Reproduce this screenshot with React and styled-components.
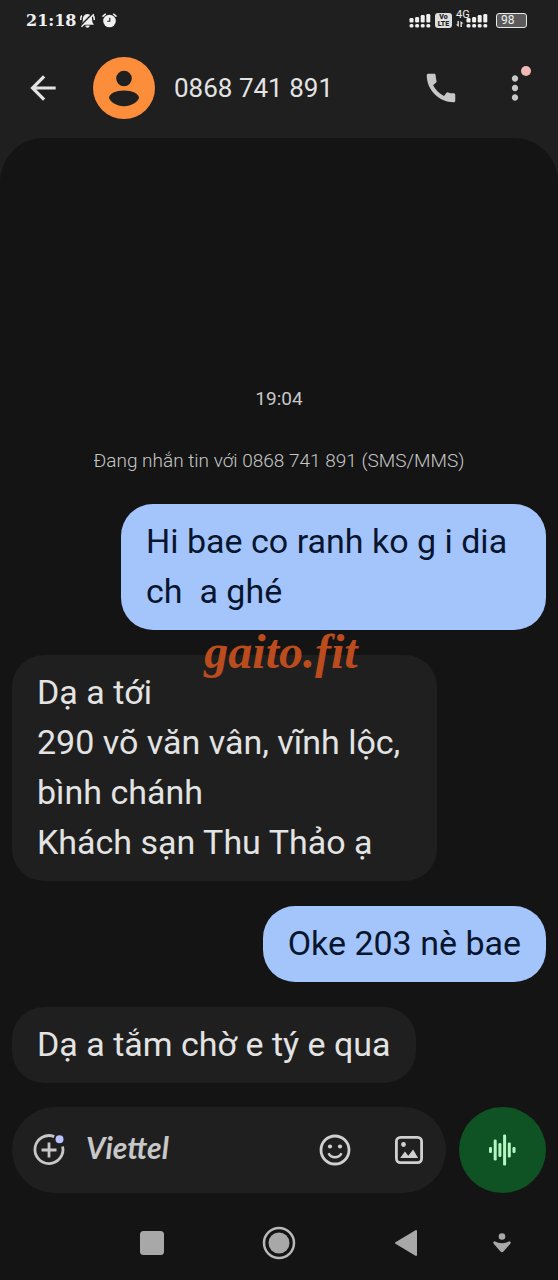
import styled, { createGlobalStyle } from "styled-components";
import { MdArrowBack, MdCall, MdMoreVert } from "react-icons/md";

const GlobalStyle = createGlobalStyle`
    * {
        box-sizing: border-box;
    }
    body {
        margin: 0;
        background-color: #1f1f1f;
        color: #e3e3e3;
        font-family: Roboto, "Noto Sans", sans-serif;
    }
    h1, p, ul {
        margin: 0;
        padding: 0;
    }
    svg {
        display: block;
    }
`;
const Screen = styled.div`
    position: relative;
    display: flex;
    flex-direction: column;
    min-height: 100vh;
`;
const StatusBar = styled.div`
    display: flex;
    justify-content: space-between;
    align-items: center;
    height: 41px;
    padding: 0 31px 0 26px;
`;
const StatusGroup = styled.div`
    display: flex;
    align-items: center;
    gap: ${(props) => props.$gap}px;
`;
const Clock = styled.span`
    font-family: "DejaVu Serif", serif;
    font-size: 16px;
    font-weight: 700;
    color: #f0f0f0;
`;
const VolteBadge = styled.span`
    display: flex;
    flex-direction: column;
    align-items: center;
    justify-content: center;
    width: 17px;
    height: 15px;
    border-radius: 3px;
    background-color: #dedede;
    color: #1f1f1f;
    font-size: 7px;
    font-weight: 900;
    line-height: 7px;
`;
const Network = styled.span`
    position: relative;
    padding-left: 10px;
`;
const NetworkLabel = styled.span`
    position: absolute;
    left: 0;
    top: -4px;
    font-size: 11px;
    line-height: 12px;
    color: #f0f0f0;
`;
const NetworkArrows = styled.svg`
    position: absolute;
    left: 0;
    bottom: 1px;
`;
const Battery = styled.span`
    display: flex;
    align-items: center;
    margin-left: 4px;
    padding-left: 4px;
    width: 31px;
    height: 15px;
    border: 1px solid #e8e8e8;
    border-radius: 3px;
    background-color: #5b5b5b;
    color: #f0f0f0;
    font-size: 12px;
    line-height: 13px;
`;
const AppBar = styled.header`
    display: flex;
    align-items: center;
    padding: 16px 24px 19px 24px;
`;
const IconButton = styled.button`
    position: relative;
    display: flex;
    justify-content: center;
    align-items: center;
    flex-shrink: 0;
    width: 38px;
    height: 38px;
    padding: 0;
    border: none;
    background: none;
    color: ${(props) => props.$color || "#c7c7c7"};
    cursor: pointer;
`;
const Avatar = styled.svg`
    flex-shrink: 0;
    margin-left: 31px;
`;
const ContactName = styled.h1`
    flex: 1;
    margin-left: 19px;
    font-size: 26px;
    font-weight: 400;
    line-height: 36px;
    white-space: nowrap;
`;
const Actions = styled.div`
    display: flex;
    gap: 36px;
`;
const Badge = styled.span`
    position: absolute;
    top: -3px;
    right: 3px;
    width: 10px;
    height: 10px;
    border-radius: 50%;
    background-color: #f2b8b5;
`;
const Panel = styled.main`
    flex: 1;
    display: flex;
    flex-direction: column;
    justify-content: flex-end;
    border-radius: 44px 44px 0 0;
    background-color: #141414;
`;
const Note = styled.p`
    margin-bottom: ${(props) => props.$space}px;
    padding: 0 12px;
    color: #c7c7c7;
    font-size: 19px;
    font-weight: ${(props) => props.$weight || 400};
    line-height: 24px;
    text-align: center;
`;
const Messages = styled.ul`
    display: flex;
    flex-direction: column;
    gap: 25px;
    padding: 0 12px;
    list-style: none;
`;
const Message = styled.li`
    align-self: ${(props) => (props.$mine ? "flex-end" : "flex-start")};
    max-width: calc(100% - 109px);
    padding: 12px 25px 14px;
    border-radius: 32px;
    background-color: ${(props) => (props.$mine ? "#a4c5fb" : "#1f1f1f")};
    color: ${(props) => (props.$mine ? "#08152e" : "#e3e3e3")};
    font-size: 34px;
    line-height: 50px;
    white-space: pre-wrap;
`;
const Composer = styled.form`
    display: flex;
    gap: 13px;
    padding: 24px 12px 0;
`;
const Field = styled.div`
    flex: 1;
    display: flex;
    align-items: center;
    min-width: 0;
    height: 86px;
    padding: 0 18px;
    border-radius: 43px;
    background-color: #1f1f1f;
`;
const TextInput = styled.input`
    flex: 1;
    min-width: 0;
    margin: 0 18px;
    padding: 0 0 6px;
    border: none;
    outline: none;
    background: none;
    color: #e3e3e3;
    font-family: Lato, sans-serif;
    font-size: 30px;
    font-style: italic;
    font-weight: 700;
    line-height: 36px;

    &::placeholder {
        color: #c7c7c7;
        opacity: 1;
    }
`;
const VoiceButton = styled.button`
    display: flex;
    justify-content: center;
    align-items: center;
    flex-shrink: 0;
    width: 87px;
    height: 86px;
    padding: 0;
    border: none;
    border-radius: 50%;
    background-color: #0f5223;
    cursor: pointer;
`;
const NavBar = styled.nav`
    display: grid;
    grid-template-columns: 88px repeat(3, 1fr) 88px;
    align-items: center;
    height: 87px;
    padding-top: 13px;
`;
const NavButton = styled.button`
    display: flex;
    justify-content: center;
    align-items: center;
    grid-column: ${(props) => props.$column};
    width: ${(props) => props.$width || "100%"};
    height: 48px;
    padding: 0;
    border: none;
    background: none;
    cursor: pointer;
`;
const Watermark = styled.div`
    position: absolute;
    inset: 0;
    display: flex;
    justify-content: center;
    align-items: center;
    padding-top: 24px;
    padding-left: 4px;
    color: #bc4b1e;
    font-family: "Liberation Serif", serif;
    font-size: 48px;
    font-style: italic;
    font-weight: 700;
    line-height: 48px;
    pointer-events: none;
`;

const messages = [
    { mine: true, text: "Hi bae co ranh ko g i dia ch  a ghé" },
    {
        mine: false,
        text: "Dạ a tới\n290 võ văn vân, vĩnh lộc, bình chánh\nKhách sạn Thu Thảo ạ",
    },
    { mine: true, text: "Oke 203 nè bae" },
    { mine: false, text: "Dạ a tắm chờ e tý e qua" },
];

function BellOffIcon() {
    return (
        <svg width="15" height="16" viewBox="0 0 15 16" fill="none">
            <path
                d="M7.500 1c-3.500.3-4.600 2.800-4.600 5.500 0 2.600-.7 3.700-1.800 5.200h12.800c-1.100-1.500-1.800-2.600-1.800-5.200 0-2.700-1.100-5.200-4.600-5.500z"
                fill="#f0f0f0"
            />
            <path d="M5.300 12.600h4.400c-.2 3-4.200 3-4.400 0z" fill="#f0f0f0" />
            <path d="M1.800 2.500C.8 4 .6 5.500.9 7M13.200 2.500c1 1.500 1.200 3 .9 4.500" stroke="#f0f0f0" strokeWidth="1.500" />
            <path d="M12.500 1L1 12.500" stroke="#1f1f1f" strokeWidth="2" />
            <path d="M13.800 1.200L1.500 13.800" stroke="#f0f0f0" strokeWidth="1.500" />
        </svg>
    );
}

function AlarmIcon() {
    return (
        <svg width="15" height="15" viewBox="0 0 15 15" fill="none">
            <circle cx="7.500" cy="8" r="6.300" fill="#f0f0f0" />
            <path d="M1 3.200L3.400 1.200M14 3.200L11.600 1.200" stroke="#f0f0f0" strokeWidth="1.500" strokeLinecap="round" />
            <path d="M7.800 4.800v3.500H5.200" stroke="#1f1f1f" strokeWidth="1.100" />
        </svg>
    );
}

function SignalIcon() {
    return (
        <svg width="22" height="15" viewBox="0 0 22 15" fill="#f0f0f0">
            {[5, 4, 2, 1].map((top, index) => (
                <g key={top}>
                    <rect x={0.5 + index * 5.6} y={top} width="4" height={9.5 - top} rx="1.300" />
                    <rect x={0.5 + index * 5.6} y="11" width="4" height="3.400" rx="1.500" />
                </g>
            ))}
        </svg>
    );
}

function AddIcon() {
    return (
        <svg width="38" height="38" viewBox="0 0 38 38" fill="none" stroke="#c7c7c7" strokeWidth="2.800">
            <path d="M24.200 5.600A14 14 0 1 0 32.600 15.500M19 11.500v15M11.500 19h15" />
            <circle cx="29.500" cy="8.300" r="4" fill="#b9c3ff" stroke="none" />
        </svg>
    );
}

function SmileIcon() {
    return (
        <svg width="38" height="38" viewBox="0 0 38 38" fill="none" stroke="#d0d0d0">
            <circle cx="19" cy="19" r="14" strokeWidth="2.800" />
            <circle cx="14" cy="15.500" r="2.100" fill="#d0d0d0" stroke="none" />
            <circle cx="24" cy="15.500" r="2.100" fill="#d0d0d0" stroke="none" />
            <path d="M12.500 22.300c2.600 5.300 10.400 5.300 13 0" strokeWidth="2.500" />
        </svg>
    );
}

function ImageIcon() {
    return (
        <svg width="38" height="38" viewBox="0 0 38 38" fill="#d0d0d0">
            <rect x="6.400" y="6.400" width="25.200" height="25.200" rx="4" fill="none" stroke="#d0d0d0" strokeWidth="2.800" />
            <circle cx="13.500" cy="13.500" r="2.400" />
            <path d="M10.200 27l4.700-6.400 3.400 4.200 4.800-6.300 5 8.500z" />
        </svg>
    );
}

function WaveIcon() {
    const bars = [
        [0, 6],
        [4.7, 21],
        [9.4, 14],
        [14.1, 31],
        [18.8, 15],
        [23.5, 6],
    ];
    return (
        <svg width="28" height="32" viewBox="0 0 28 32" fill="#b5f5c4">
            {bars.map(([x, height]) => (
                <rect key={x} x={x} y={16 - height / 2} width="3" height={height} rx="1.300" />
            ))}
        </svg>
    );
}

function App() {
    return (
        <Screen>
            <GlobalStyle />
            <StatusBar>
                <StatusGroup $gap={7}>
                    <StatusGroup $gap={4}>
                        <Clock>21:18</Clock>
                        <BellOffIcon />
                    </StatusGroup>
                    <AlarmIcon />
                </StatusGroup>
                <StatusGroup $gap={4}>
                    <SignalIcon />
                    <VolteBadge>
                        <span>Vo</span>
                        <span>LTE</span>
                    </VolteBadge>
                    <Network>
                        <NetworkLabel>4G</NetworkLabel>
                        <NetworkArrows width="8" height="6" viewBox="0 0 8 6" fill="#f0f0f0">
                            <path d="M1.500 0h1.300v6L0 3.500h1.500zM4.500 6V0l3 2.500H5.800V6z" />
                        </NetworkArrows>
                        <SignalIcon />
                    </Network>
                    <Battery>98</Battery>
                </StatusGroup>
            </StatusBar>
            <AppBar>
                <IconButton type="button" aria-label="Quay lại" $color="#e3e3e3">
                    <MdArrowBack size={38} />
                </IconButton>
                <Avatar width="62" height="62" viewBox="0 0 62 62">
                    <circle cx="31" cy="31" r="31" fill="#fc8e3b" />
                    <circle cx="31" cy="21.500" r="7.800" fill="#1f1f1f" />
                    <path
                        d="M16 41c0-4.500 7-7.500 15-7.500s15 3 15 7.500c-1 3.500-7.500 8.300-15 8.300s-14-4.800-15-8.300z"
                        fill="#1f1f1f"
                    />
                </Avatar>
                <ContactName>0868 741 891</ContactName>
                <Actions>
                    <IconButton type="button" aria-label="Gọi">
                        <MdCall size={38} />
                    </IconButton>
                    <IconButton type="button" aria-label="Tùy chọn khác">
                        <MdMoreVert size={38} />
                        <Badge />
                    </IconButton>
                </Actions>
            </AppBar>
            <Panel>
                <Note $space={38}>19:04</Note>
                <Note $space={31} $weight={300}>
                    Đang nhắn tin với 0868 741 891 (SMS/MMS)
                </Note>
                <Messages>
                    {messages.map((message) => (
                        <Message key={message.text} $mine={message.mine}>
                            {message.text}
                        </Message>
                    ))}
                </Messages>
                <Composer>
                    <Field>
                        <IconButton type="button" aria-label="Thêm">
                            <AddIcon />
                        </IconButton>
                        <TextInput type="text" placeholder="Viettel" aria-label="Tin nhắn" />
                        <Actions>
                            <IconButton type="button" aria-label="Biểu tượng cảm xúc">
                                <SmileIcon />
                            </IconButton>
                            <IconButton type="button" aria-label="Thư viện ảnh">
                                <ImageIcon />
                            </IconButton>
                        </Actions>
                    </Field>
                    <VoiceButton type="button" aria-label="Ghi âm">
                        <WaveIcon />
                    </VoiceButton>
                </Composer>
                <NavBar>
                    <NavButton type="button" aria-label="Gần đây" $column={2}>
                        <svg width="24" height="24" viewBox="0 0 24 24">
                            <rect width="24" height="24" rx="3.500" fill="#a8a8a8" />
                        </svg>
                    </NavButton>
                    <NavButton type="button" aria-label="Trang chủ" $column={3}>
                        <svg width="34" height="34" viewBox="0 0 34 34">
                            <circle cx="17" cy="17" r="15" fill="none" stroke="#b8b8b8" strokeWidth="2.500" />
                            <circle cx="17" cy="17" r="10.500" fill="#a8a8a8" />
                        </svg>
                    </NavButton>
                    <NavButton type="button" aria-label="Trở về" $column={4}>
                        <svg width="24" height="28" viewBox="0 0 24 28">
                            <path
                                d="M2 14L22 2v24z"
                                fill="#a8a8a8"
                                stroke="#a8a8a8"
                                strokeWidth="2"
                                strokeLinejoin="round"
                            />
                        </svg>
                    </NavButton>
                    <NavButton type="button" aria-label="Trợ năng" $column={5} $width="64px">
                        <svg width="20" height="22" viewBox="0 0 20 22" fill="#a8a8a8">
                            <circle cx="10" cy="4.500" r="3.300" />
                            <path d="M2.500 9.200c5 2.600 10 2.600 15 0 1.500.3 1.500 1.800.6 2.700l-6.600 7.600c-1 1-2 1-3 0l-6.600-7.600c-.9-.9-.9-2.400.6-2.700z" />
                        </svg>
                    </NavButton>
                </NavBar>
            </Panel>
            <Watermark>gaito.fit</Watermark>
        </Screen>
    );
}

export default App;
